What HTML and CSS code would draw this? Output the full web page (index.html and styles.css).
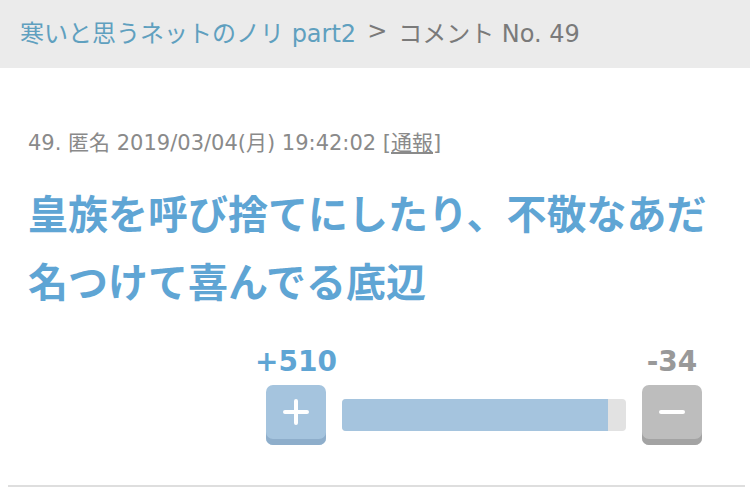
FILE: index.html
```html
<!DOCTYPE html>
<html lang="ja">
<head>
<meta charset="UTF-8" />
<meta name="viewport" content="width=device-width, initial-scale=1" />
<title>コメント No. 49</title>
<link rel="stylesheet" href="styles.css">
</head>
<body>

<div class="crumbs">
  <a href="#">寒いと思うネットのノリ part2</a>
  <span class="sep">&gt;</span>
  <span>コメント No. 49</span>
</div>

<div class="comment">
  <div class="meta">49. 匿名 2019/03/04(月) 19:42:02 [<a href="#">通報</a>]</div>
  <div class="body">皇族を呼び捨てにしたり、不敬なあだ名つけて喜んでる底辺</div>

  <div class="vote">
    <div class="vote-col">
      <div class="count plus">+510</div>
      <div class="btn btn-plus">
        <svg width="28" height="28" viewBox="0 0 28 28"><path d="M14 3v22M3 14h22" stroke="#fff" stroke-width="4" stroke-linecap="round"/></svg>
      </div>
    </div>
    <div class="bar"><div class="bar-fill" style="width: 93.75%"></div></div>
    <div class="vote-col">
      <div class="count minus">-34</div>
      <div class="btn btn-minus">
        <svg width="28" height="28" viewBox="0 0 28 28"><path d="M3 14h22" stroke="#fff" stroke-width="4" stroke-linecap="round"/></svg>
      </div>
    </div>
  </div>
</div>

<div class="rule"></div>

</body>
</html>
```

FILE: styles.css
```css
body {
  margin: 0;
  font-family: "DejaVu Sans", "Noto Sans CJK JP", sans-serif;
  background: #fff;
  color: #888;
}
a {
  color: inherit;
}
.crumbs {
  height: 68px;
  box-sizing: border-box;
  background: #ebebeb;
  display: flex;
  align-items: center;
  padding: 0 0 6px 20px;
  font-size: 24px;
  color: #7a7a7a;
  gap: 11px;
}
.crumbs a {
  color: #5fa0bf;
  text-decoration: none;
}
.comment {
  padding: 0 28px;
}
.meta {
  margin-top: 63px;
  font-size: 21px;
  line-height: 24px;
  color: #8a8a8a;
}
.meta a {
  color: #8a8a8a;
}
.body {
  margin-top: 23px;
  font-family: "Noto Sans CJK JP", sans-serif;
  font-size: 40px;
  line-height: 68px;
  font-weight: bold;
  color: #5fa5d4;
}
.vote {
  display: flex;
  align-items: flex-end;
  margin: 32px 20px 0 238px;
  gap: 16px;
}
.vote-col {
  display: flex;
  flex-direction: column;
  align-items: center;
  width: 60px;
}
.count {
  font-size: 28px;
  font-weight: bold;
  line-height: 32px;
  white-space: nowrap;
  margin-bottom: 7px;
}
.count.plus {
  color: #5fa5d4;
}
.count.minus {
  color: #999;
}
.btn {
  width: 60px;
  height: 60px;
  border-radius: 7px;
  display: flex;
  align-items: center;
  justify-content: center;
  box-sizing: border-box;
  padding-bottom: 6px;
}
.btn-plus {
  background: #a5c4de;
  box-shadow: inset 0 -6px 0 #8eaecb;
}
.btn-minus {
  background: #bdbdbd;
  box-shadow: inset 0 -6px 0 #a3a3a3;
}
.bar {
  flex: 1;
  height: 32px;
  margin-bottom: 14px;
  background: #e2e2e2;
  border-radius: 4px;
  overflow: hidden;
}
.bar-fill {
  height: 100%;
  background: #a5c4de;
}
.rule {
  height: 2px;
  background: #dedede;
  margin: 40px 5px 0 8px;
}
```
